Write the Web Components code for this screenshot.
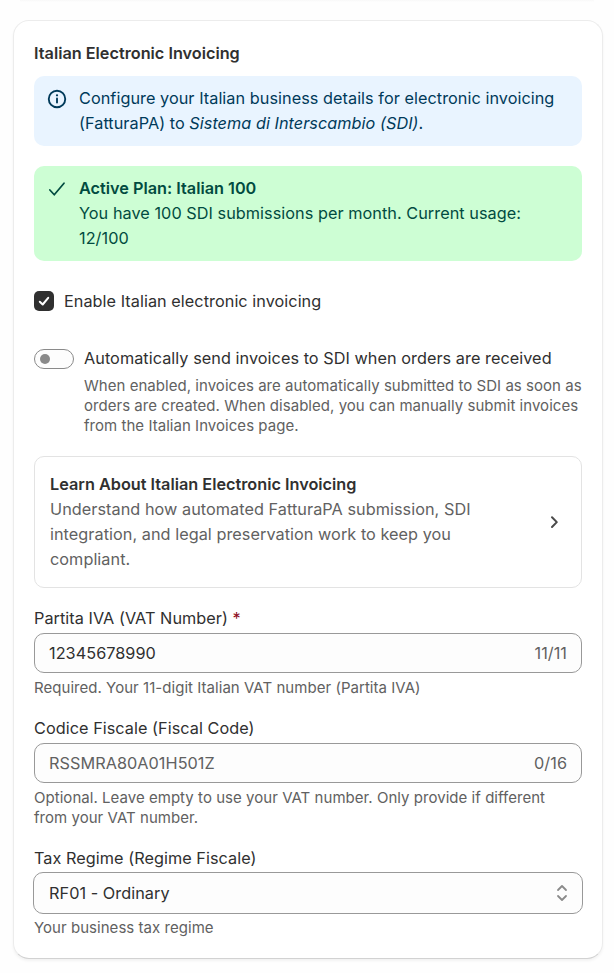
<!DOCTYPE html>
<html lang="en">
<head>
  <meta charset="utf-8">
  <title>Italian Electronic Invoicing</title>
  <style>
    body {
      margin: 0;
      background: #fefefe;
      color: #303030;
      font: 400 16.25px/25px Inter, "Liberation Sans", sans-serif;
      letter-spacing: 0.043px;
    }
  </style>
</head>
<body>
  <invoice-settings></invoice-settings>

  <script>
    class SettingsCard extends HTMLElement {
      constructor() {
        super();
        this.attachShadow({ mode: 'open' });
      }

      connectedCallback() {
        this.shadowRoot.innerHTML = `
          <style>
            :host {
              display: block;
              box-sizing: border-box;
              padding: 20px;
              border: 1px solid #ececec;
              border-bottom-color: #d2d2d2;
              border-radius: 16px;
              background: #fff;
              box-shadow: 0 2px 3px rgba(0, 0, 0, 0.05);
            }
            h2 {
              margin: 0 0 10px;
              font-size: 16.25px;
              font-weight: 600;
              letter-spacing: 0;
              line-height: 25px;
            }
          </style>
          <h2>${this.getAttribute('heading')}</h2>
          <slot></slot>
        `;
      }
    }

    class InfoBanner extends HTMLElement {
      constructor() {
        super();
        this.attachShadow({ mode: 'open' });
      }

      connectedCallback() {
        const success = this.getAttribute('tone') === 'success';
        const icon = success
          ? '<path d="M4.7 11.2 L8.2 15 L16 5.8" stroke-width="1.4"/>'
          : '<circle cx="10.4" cy="10.4" r="6.6" stroke-width="1.5"/><path d="M10.4 10V13.2" stroke-width="1.5"/><circle cx="10.4" cy="7.4" r=".9" fill="currentColor" stroke="none"/>';

        this.shadowRoot.innerHTML = `
          <style>
            :host {
              display: flex;
              gap: 10px;
              padding: 10px;
              border-radius: 10px;
              background: ${success ? '#cdfed4' : '#e9f4ff'};
              color: ${success ? '#014b40' : '#003a5a'};
            }
            svg {
              flex: none;
              width: 25px;
              height: 25px;
              fill: none;
              stroke: currentColor;
              stroke-linecap: round;
              stroke-linejoin: round;
            }
          </style>
          <svg viewBox="0 0 20 20">${icon}</svg>
          <div><slot></slot></div>
        `;
      }
    }

    class CheckOption extends HTMLElement {
      constructor() {
        super();
        this.attachShadow({ mode: 'open' });
      }

      connectedCallback() {
        this.shadowRoot.innerHTML = `
          <style>
            :host {
              display: flex;
              gap: 10px;
            }
            .box {
              width: 20px;
              height: 20px;
              margin-top: 2px;
              border-radius: 5px;
              background: #303030;
            }
            svg {
              display: block;
              fill: none;
              stroke: #fff;
              stroke-width: 2;
              stroke-linecap: round;
              stroke-linejoin: round;
            }
          </style>
          <span class="box" role="checkbox" aria-checked="true">
            <svg width="20" height="20" viewBox="0 0 20 20"><path d="M5.8 10.7 L8.7 13.5 L14.2 6.8"/></svg>
          </span>
          <span><slot></slot></span>
        `;
      }
    }

    class ToggleOption extends HTMLElement {
      constructor() {
        super();
        this.attachShadow({ mode: 'open' });
      }

      connectedCallback() {
        this.shadowRoot.innerHTML = `
          <style>
            :host {
              display: flex;
              gap: 10px;
            }
            .track {
              flex: none;
              display: flex;
              align-items: center;
              box-sizing: border-box;
              width: 40px;
              height: 20px;
              margin-top: 3px;
              padding-left: 5px;
              border: 1px solid #8a8a8a;
              border-radius: 10px;
              background: #fdfdfd;
            }
            .thumb {
              width: 10px;
              height: 10px;
              border-radius: 50%;
              background: #8a8a8a;
            }
            .help {
              margin: 5px -2px 0 0;
              color: #616161;
              font-size: 15px;
              letter-spacing: 0.038px;
              line-height: 20px;
            }
          </style>
          <span class="track" role="switch" aria-checked="false"><span class="thumb"></span></span>
          <div>
            <div>${this.getAttribute('label')}</div>
            <div class="help"><slot></slot></div>
          </div>
        `;
      }
    }

    class LearnLink extends HTMLElement {
      constructor() {
        super();
        this.attachShadow({ mode: 'open' });
      }

      connectedCallback() {
        this.shadowRoot.innerHTML = `
          <style>
            :host {
              display: flex;
              align-items: center;
              gap: 10px;
              padding: 15px;
              border: 1px solid #e3e3e3;
              border-radius: 10px;
            }
            .body {
              flex: 1;
              color: #616161;
            }
            .title {
              color: #303030;
              font-weight: 600;
              letter-spacing: 0;
            }
            svg {
              flex: none;
              fill: none;
              stroke: #4a4a4a;
              stroke-width: 2;
              stroke-linecap: round;
              stroke-linejoin: round;
            }
          </style>
          <div class="body">
            <div class="title">${this.getAttribute('heading')}</div>
            <slot></slot>
          </div>
          <svg width="25" height="25" viewBox="0 0 25 25"><path d="M11 7.2 L15.8 12.1 L11 17"/></svg>
        `;
      }
    }

    class FormField extends HTMLElement {
      constructor() {
        super();
        this.attachShadow({ mode: 'open' });
      }

      connectedCallback() {
        const value = this.getAttribute('value');
        const select = this.hasAttribute('select');
        const suffix = select
          ? '<svg width="14" height="18" viewBox="0 0 14 18"><path d="M3 6 L7 2 L11 6 M3 12 L7 16 L11 12"/></svg>'
          : `<span class="count">${this.getAttribute('count')}</span>`;

        this.shadowRoot.innerHTML = `
          <style>
            :host {
              display: block;
            }
            .required {
              color: #8e0b21;
            }
            .control {
              display: flex;
              align-items: center;
              justify-content: space-between;
              box-sizing: border-box;
              height: 40px;
              margin: 2px 0 5px;
              padding: 0 14px;
              border: 1px solid #999;
              border-radius: 10px;
              background: #fdfdfd;
            }
            .control.select {
              height: 42px;
              margin: 1px -1px 4px;
              padding: 0 13px 0 15px;
            }
            .placeholder,
            .count {
              color: #616161;
            }
            .help {
              padding-right: 6px;
              color: #616161;
              font-size: 15px;
              letter-spacing: 0.038px;
              line-height: 20px;
            }
            svg {
              fill: none;
              stroke: #8a8a8a;
              stroke-width: 1.8;
              stroke-linecap: round;
              stroke-linejoin: round;
            }
          </style>
          <div>${this.getAttribute('label')}${this.hasAttribute('required') ? ' <span class="required">*</span>' : ''}</div>
          <div class="control ${select ? 'select' : ''}">
            <span class="${value ? '' : 'placeholder'}">${value || this.getAttribute('placeholder')}</span>
            ${suffix}
          </div>
          <div class="help"><slot></slot></div>
        `;
      }
    }

    class InvoiceSettings extends HTMLElement {
      constructor() {
        super();
        this.attachShadow({ mode: 'open' });
      }

      connectedCallback() {
        this.shadowRoot.innerHTML = `
          <style>
            :host {
              display: block;
              height: 973px;
              overflow: hidden;
            }
            /* bottom shadow of the card scrolled off above */
            .previous {
              height: 20px;
              margin: 0 20px;
              background: linear-gradient(#f8f8f8, #fefefe 2px);
            }
            settings-card {
              margin: 0 11px 0 13px;
            }
            info-banner + info-banner {
              margin-top: 20px;
            }
            check-option {
              margin-top: 28px;
            }
            toggle-option {
              margin-top: 32px;
            }
            learn-link {
              margin-top: 20px;
            }
            form-field {
              margin-top: 18px;
            }
            strong {
              font-weight: 600;
              letter-spacing: 0;
            }
          </style>
          <div class="previous"></div>
          <settings-card heading="Italian Electronic Invoicing">
            <info-banner>Configure your Italian business details for electronic invoicing (FatturaPA) to <em>Sistema di Interscambio (SDI)</em>.</info-banner>
            <info-banner tone="success"><strong>Active Plan: Italian 100</strong><br>You have 100 SDI submissions per month. Current usage: 12/100</info-banner>
            <check-option>Enable Italian electronic invoicing</check-option>
            <toggle-option label="Automatically send invoices to SDI when orders are received">When enabled, invoices are automatically submitted to SDI as soon as orders are created. When disabled, you can manually submit invoices from the Italian Invoices page.</toggle-option>
            <learn-link heading="Learn About Italian Electronic Invoicing">Understand how automated FatturaPA submission, SDI integration, and legal preservation work to keep you compliant.</learn-link>
            <form-field label="Partita IVA (VAT Number)" required value="12345678990" count="11/11">Required. Your 11-digit Italian VAT number (Partita IVA)</form-field>
            <form-field label="Codice Fiscale (Fiscal Code)" placeholder="RSSMRA80A01H501Z" count="0/16">Optional. Leave empty to use your VAT number. Only provide if different from your VAT number.</form-field>
            <form-field label="Tax Regime (Regime Fiscale)" select value="RF01 - Ordinary">Your business tax regime</form-field>
          </settings-card>
        `;
      }
    }

    customElements.define('settings-card', SettingsCard);
    customElements.define('info-banner', InfoBanner);
    customElements.define('check-option', CheckOption);
    customElements.define('toggle-option', ToggleOption);
    customElements.define('learn-link', LearnLink);
    customElements.define('form-field', FormField);
    customElements.define('invoice-settings', InvoiceSettings);
  </script>
</body>
</html>
